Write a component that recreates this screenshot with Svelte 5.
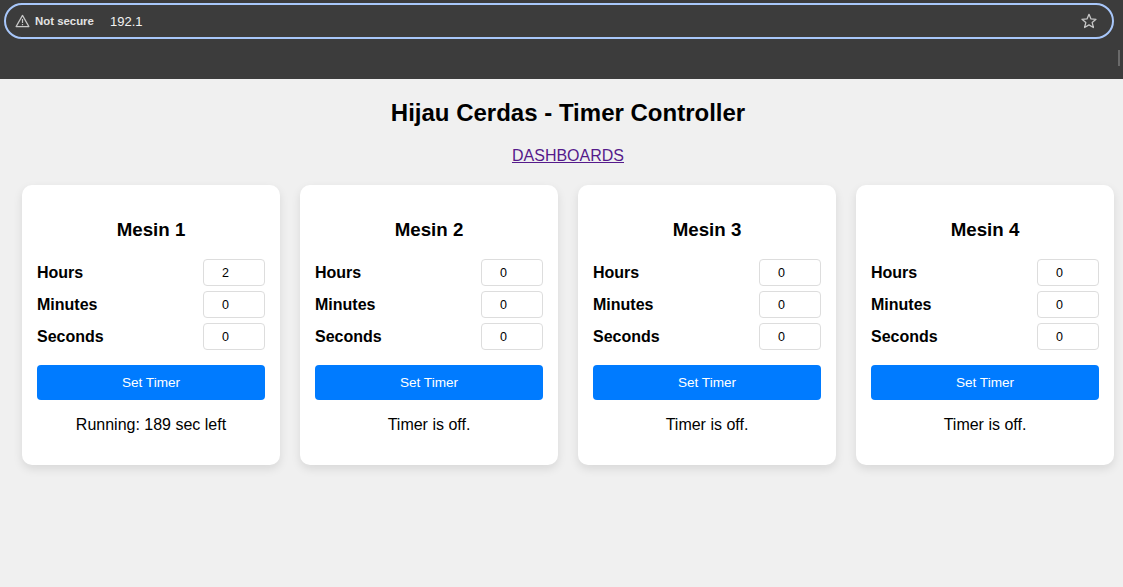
<script>
  const machines = [
    { name: 'Mesin 1', hours: 2, status: 'Running: 189 sec left' },
    { name: 'Mesin 2', hours: 0, status: 'Timer is off.' },
    { name: 'Mesin 3', hours: 0, status: 'Timer is off.' },
    { name: 'Mesin 4', hours: 0, status: 'Timer is off.' },
  ];
</script>

<div class="chrome">
  <div class="omnibox">
    <svg class="warn" width="15" height="14" viewBox="0 0 15 14" fill="none" stroke="#c7c7c7" stroke-width="1.2">
      <path d="M7.5 1.4 L13.9 12.6 H1.1 Z" stroke-linejoin="round" />
      <path d="M7.5 5 V9 M7.5 10 V11.2" />
    </svg>
    <span class="secure">Not secure</span>
    <span class="url">192.1</span>
    <svg class="star" width="16" height="16" viewBox="0 0 16 16" fill="none" stroke="#c7c7c7" stroke-width="1.3">
      <path d="M8 1.3 L10 5.9 L15 6.3 L11.2 9.6 L12.4 14.5 L8 11.9 L3.6 14.5 L4.8 9.6 L1 6.3 L6 5.9 Z" stroke-linejoin="round" />
    </svg>
  </div>
  <div class="scroll-mark"></div>
</div>

<div class="page">
  <h1>Hijau Cerdas - Timer Controller</h1>
  <p class="links"><a href="#dashboards">DASHBOARDS</a></p>

  <div class="cards">
    {#each machines as m}
      <div class="card">
        <h2>{m.name}</h2>
        <div class="row"><label for="{m.name}-h">Hours</label><input id="{m.name}-h" type="number" value={m.hours} /></div>
        <div class="row"><label for="{m.name}-m">Minutes</label><input id="{m.name}-m" type="number" value="0" /></div>
        <div class="row"><label for="{m.name}-s">Seconds</label><input id="{m.name}-s" type="number" value="0" /></div>
        <button>Set Timer</button>
        <p class="status">{m.status}</p>
      </div>
    {/each}
  </div>
</div>

<style>
  :global(html), :global(body) {
    background: #f0f0f0;
    overflow: hidden;
    height: 100%;
    font-family: "Liberation Sans", Arial, sans-serif;
  }

  /* browser bar */
  .chrome {
    height: 79px;
    background: #3c3c3c;
    box-sizing: border-box;
    padding: 3px 3px 0 4px;
    display: flex;
    gap: 4px;
  }
  .omnibox {
    flex: 1;
    height: 36px;
    box-sizing: border-box;
    border: 2px solid #a8c7fa;
    border-radius: 18px;
    display: flex;
    align-items: center;
    padding: 0 15px 0 9px;
    color: #e3e3e3;
  }
  .warn { flex: none; }
  .secure {
    margin-left: 5px;
    font-size: 11.4px;
    font-weight: bold;
    width: 75px;
  }
  .url {
    font-size: 13px;
    color: #f2f2f2;
  }
  .star { margin-left: auto; }
  .scroll-mark {
    width: 2px;
    height: 16px;
    margin-top: 47px;
    background: #6a6a6a;
  }

  /* page */
  .page {
    width: 1136px;
    padding: 0 22px 20px;
    box-sizing: border-box;
    text-align: center;
  }
  h1 {
    margin: 0;
    padding-top: 20px;
    font-size: 24px;
    line-height: 28px;
    font-weight: bold;
    color: #000;
  }
  .links {
    margin: 20px 0 0;
    font-size: 16px;
    line-height: 18px;
  }
  a { color: #551a8b; }

  .cards {
    margin-top: 20px;
    display: flex;
    gap: 20px;
  }
  .card {
    width: 258px;
    height: 280px;
    box-sizing: border-box;
    padding: 34px 15px 0;
    background: #fff;
    border-radius: 10px;
    box-shadow: 0 4px 10px rgba(0, 0, 0, 0.1);
  }
  h2 {
    margin: 0 0 19px;
    font-size: 18.72px;
    line-height: 21px;
    font-weight: bold;
    color: #000;
  }
  .row {
    display: flex;
    justify-content: space-between;
    align-items: center;
    height: 27px;
    margin-bottom: 5px;
  }
  label {
    font-size: 16px;
    font-weight: bold;
    color: #000;
  }
  input {
    width: 62px;
    height: 27px;
    box-sizing: border-box;
    padding: 1px 4px 1px 2px;
    border: 1px solid #ddd;
    border-radius: 4px;
    background: #fff;
    color: #000;
    font-family: "Liberation Sans", Arial, sans-serif;
    font-size: 12.5px;
    text-align: center;
  }
  button {
    display: block;
    width: 100%;
    height: 35px;
    margin-top: 15px;
    border: none;
    border-radius: 4px;
    background: #007bff;
    color: #fff;
    font-family: "Liberation Sans", Arial, sans-serif;
    font-size: 13.6px;
  }
  .status {
    margin: 16px 0 0;
    font-size: 16px;
    line-height: 18px;
    color: #000;
  }
</style>
